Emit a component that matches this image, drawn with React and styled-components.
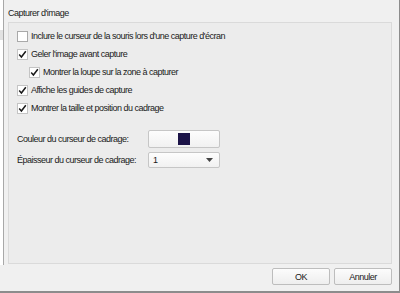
import React from "react";
import styled, { createGlobalStyle } from "styled-components";

const Global = createGlobalStyle`
  html, body { margin: 0; padding: 0; background: #f0f0f0; }
  body { font-family: "Liberation Sans", Arial, sans-serif; font-size: 9px; letter-spacing: -0.5px; color: #1a1a1a; }
  * { box-sizing: border-box; }
`;

const Window = styled.div`
  width: 400px;
  height: 293px;
  background: #f0f0f0;
  border-right: 1px solid #8c8c8c;
  border-bottom: 2px solid #8c8c8c;
  display: flex;
  flex-direction: column;
`;

const Main = styled.div`
  display: flex;
  height: 265px;
  gap: 4px;
`;

const SideList = styled.div`
  width: 4px;
  background: #fff;
  border-right: 1px solid #a8a8a8;
  display: flex;
  flex-direction: column;
  padding-top: 30px;
`;

const SideSelected = styled.div`
  height: 10px;
  background: #e2e2e2;
`;

const Content = styled.div`
  flex: 1;
  display: flex;
  flex-direction: column;
  padding-right: 7px;
`;

const GroupTitle = styled.div`
  height: 22px;
  line-height: 22px;
  padding-top: 2px;
`;

const GroupBox = styled.div`
  flex: 1;
  margin-bottom: 1px;
  background: #ececec;
  border: 1px solid #dadada;
  padding: 4px 8px 0 8px;
  display: flex;
  flex-direction: column;
`;

const CheckRow = styled.label`
  display: flex;
  align-items: center;
  height: 18px;
  gap: 3px;
  white-space: nowrap;
  padding-left: ${(p) => (p.$indent ? "12px" : "0")};
`;

const Box = styled.span`
  width: 11px;
  height: 11px;
  flex: none;
  background: #fff;
  border: 1px solid ${(p) => (p.$checked ? "#c4c4c4" : "#a9a9a9")};
  display: flex;
  align-items: center;
  justify-content: center;
`;

const FormGrid = styled.div`
  margin-top: 13px;
  display: grid;
  grid-template-columns: 131px 72px;
  row-gap: 4px;
  align-items: center;
`;

const Label = styled.span`
  white-space: nowrap;
`;

const ColorButton = styled.div`
  height: 18px;
  border: 1px solid #c6c6c6;
  border-radius: 2px;
  background: linear-gradient(#fdfdfd, #f1f1f1);
  display: flex;
  align-items: center;
  justify-content: center;
`;

const Swatch = styled.span`
  width: 12px;
  height: 12px;
  background: ${(p) => p.$color};
`;

const Combo = styled.div`
  height: 16px;
  border: 1px solid #c6c6c6;
  border-radius: 2px;
  background: linear-gradient(#fdfdfd, #f1f1f1);
  display: flex;
  align-items: center;
  justify-content: space-between;
  padding: 0 6px 0 4px;
`;

const Footer = styled.div`
  display: flex;
  justify-content: flex-end;
  gap: 4px;
  padding: 3px 7px 0 0;
`;

const Button = styled.button`
  width: 58px;
  height: 17px;
  padding: 0;
  border: 1px solid #bdbdbd;
  border-radius: 2px;
  background: linear-gradient(#fcfcfc, #eeeeee);
  font-family: inherit;
  font-size: inherit;
  letter-spacing: inherit;
  color: #1a1a1a;
`;

const Check = () => (
  <svg width="9" height="9" viewBox="0 0 9 9">
    <path d="M1.2 4.6 L3.4 7 L7.8 1.2" fill="none" stroke="#1a1a1a" strokeWidth="1.5" />
  </svg>
);

const Checkbox = ({ checked, indent, children }) => (
  <CheckRow $indent={indent}>
    <Box $checked={checked}>{checked && <Check />}</Box>
    <span>{children}</span>
  </CheckRow>
);

export default function App() {
  return (
    <>
      <Global />
      <Window>
        <Main>
          <SideList>
            <SideSelected />
          </SideList>
          <Content>
            <GroupTitle>Capturer d'image</GroupTitle>
            <GroupBox>
              <Checkbox>Inclure le curseur de la souris lors d'une capture d'écran</Checkbox>
              <Checkbox checked>Geler l'image avant capture</Checkbox>
              <Checkbox checked indent>Montrer la loupe sur la zone à capturer</Checkbox>
              <Checkbox checked>Affiche les guides de capture</Checkbox>
              <Checkbox checked>Montrer la taille et position du cadrage</Checkbox>
              <FormGrid>
                <Label>Couleur du curseur de cadrage:</Label>
                <ColorButton>
                  <Swatch $color="#1c1448" />
                </ColorButton>
                <Label>Épaisseur du curseur de cadrage:</Label>
                <Combo>
                  <span>1</span>
                  <svg width="7" height="4" viewBox="0 0 7 4">
                    <path d="M0 0 H7 L3.5 4 Z" fill="#444" />
                  </svg>
                </Combo>
              </FormGrid>
            </GroupBox>
          </Content>
        </Main>
        <Footer>
          <Button>OK</Button>
          <Button>Annuler</Button>
        </Footer>
      </Window>
    </>
  );
}
